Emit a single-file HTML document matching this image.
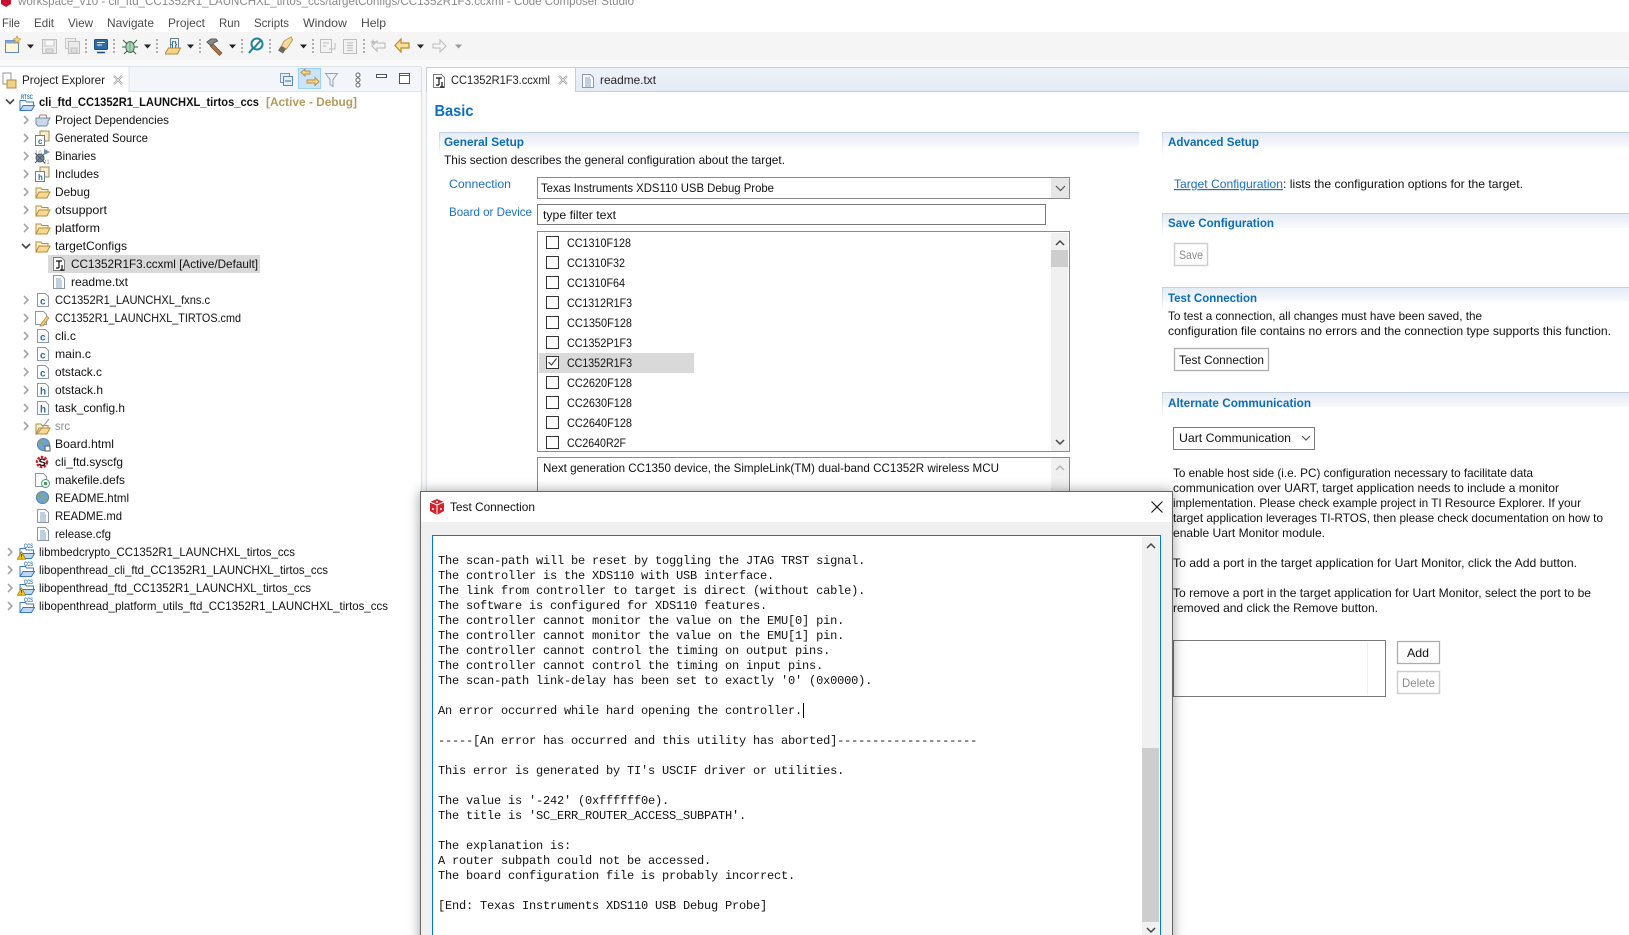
<!DOCTYPE html>
<html lang="en"><head><meta charset="utf-8"><title>Code Composer Studio</title>
<style>
html,body{margin:0;padding:0;background:#fff;width:1629px;height:935px;overflow:hidden}
svg{display:block;position:absolute;left:0;top:0}
text{font-family:"Liberation Sans",sans-serif;font-size:12px;fill:#111}
.b{font-weight:bold}
.h{font-weight:bold;fill:#0b6db8}
.l{fill:#1a6fc9}
.g{fill:#8c8c8c}
.m{fill:#4b4b4b}
.chev{fill:none;stroke:#a6a6a6;stroke-width:1.6}
.chevd{fill:none;stroke:#444;stroke-width:1.6}
.arr{fill:none;stroke:#555;stroke-width:1.2}
.ics{font-size:6px;font-weight:bold;fill:#2f78c4}
#log{position:absolute;left:438px;top:554px;margin:0;font:12px/15px "Liberation Mono",monospace;letter-spacing:-.2px;color:#111;white-space:pre}
#caret{position:absolute;left:803px;top:703px;width:1px;height:15px;background:#000}
</style></head><body>
<svg width="1629" height="935" viewBox="0 0 1629 935">
<defs>
<linearGradient id="sec" x1="0" y1="0" x2="0" y2="1"><stop offset="0" stop-color="#e3eaf4"/><stop offset="1" stop-color="#f8fafd"/></linearGradient>
<linearGradient id="fade" x1="0" y1="0" x2="0" y2="1"><stop offset="0" stop-color="#c6d2e2"/><stop offset="1" stop-color="#fff"/></linearGradient>
<linearGradient id="strip" x1="0" y1="0" x2="0" y2="1"><stop offset="0" stop-color="#f0f4fa"/><stop offset="1" stop-color="#e3eaf4"/></linearGradient>
<filter id="ds" x="-5%" y="-8%" width="110%" height="116%"><feDropShadow dx="0" dy="0" stdDeviation="6" flood-color="#000" flood-opacity=".38"/></filter>
<symbol id="fo" viewBox="0 0 16 16"><path d="M1 14V4h5l1 1.500h6V8" fill="#fff3cf" stroke="#b78a3c"/><path d="M1 14l3-6h11l-3 6z" fill="#f7d98f" stroke="#b78a3c"/></symbol>
<symbol id="fc" viewBox="0 0 16 16"><path d="M2.500 1.500h8l3 3v10h-11z" fill="#fff" stroke="#8b98ab"/><text x="5" y="12.500" style="font-size:10px;font-weight:bold;fill:#2b6aa8">c</text></symbol>
<symbol id="fh" viewBox="0 0 16 16"><path d="M2.500 1.500h8l3 3v10h-11z" fill="#fff" stroke="#8b98ab"/><text x="5" y="12.500" style="font-size:10px;font-weight:bold;fill:#2b6aa8">h</text></symbol>
<symbol id="ft" viewBox="0 0 16 16"><path d="M2.500 1.500h8l3 3v10h-11z" fill="#fff" stroke="#8b98ab"/><path d="M5 5h5M5 7h6M5 9h6M5 11h6M5 13h6" stroke="#7f9cc0" fill="none"/></symbol>
<symbol id="fx" viewBox="0 0 16 16"><path d="M2.500 1.500h8l3 3v10h-11z" fill="#fff" stroke="#7f7f7f"/><path d="M5 5h6M8 5v7M5 12h3M11 9v5M9 14h4" stroke="#111" fill="none" stroke-width="1.200"/></symbol>
<symbol id="pj" viewBox="0 0 16 16"><path d="M1 13V3.500h5.500l1 1.500h7v3" fill="#fff" stroke="#3c78c0"/><path d="M1 13.500l3-5h11.500l-3 5z" fill="#bcd8f2" stroke="#3c78c0"/></symbol>
<symbol id="gb" viewBox="0 0 16 16"><circle cx="8" cy="8" r="6.500" fill="#6aa3d8" stroke="#5a7fa6"/><path d="M3 5c2-2 4-2 5 0s-1 3-3 3-2 3-1 4" fill="#8aa66c"/><path d="M10 8c2 0 3 1 3 2s-2 3-3 2z" fill="#8aa66c"/></symbol>
<symbol id="wn" viewBox="0 0 12 12"><path d="M6 1l5.500 10H.5z" fill="#f5c518" stroke="#9a7a10"/><path d="M6 4v4M6 9v1" stroke="#222"/></symbol>
</defs>

<!-- title + menu -->
<rect width="1629" height="32" fill="#fff"/>
<path d="M1 0h10v4l-5 3-5-3z" fill="#c8102e"/>
<text x="18" y="5" textLength="616" lengthAdjust="spacingAndGlyphs" style="fill:#8a8a8a">workspace_v10 - cli_ftd_CC1352R1_LAUNCHXL_tirtos_ccs/targetConfigs/CC1352R1F3.ccxml - Code Composer Studio</text>
<g>
<text class="m" x="2" y="27" textLength="18" lengthAdjust="spacingAndGlyphs">File</text>
<text class="m" x="34" y="27" textLength="20" lengthAdjust="spacingAndGlyphs">Edit</text>
<text class="m" x="68" y="27" textLength="25" lengthAdjust="spacingAndGlyphs">View</text>
<text class="m" x="107" y="27" textLength="47" lengthAdjust="spacingAndGlyphs">Navigate</text>
<text class="m" x="168" y="27" textLength="37" lengthAdjust="spacingAndGlyphs">Project</text>
<text class="m" x="219" y="27" textLength="21" lengthAdjust="spacingAndGlyphs">Run</text>
<text class="m" x="254" y="27" textLength="35" lengthAdjust="spacingAndGlyphs">Scripts</text>
<text class="m" x="303" y="27" textLength="44" lengthAdjust="spacingAndGlyphs">Window</text>
<text class="m" x="361" y="27" textLength="25" lengthAdjust="spacingAndGlyphs">Help</text>
</g>

<!-- toolbar -->
<rect y="32" width="1629" height="28" fill="#f5f5f5"/>
<rect y="60" width="1629" height="875" fill="#fff"/>
<rect y="60" width="1629" height="7" fill="#fafafa"/>
<g>
<rect x="5.500" y="40.500" width="13" height="12" fill="#fdf6d8" stroke="#5d88b8"/><rect x="5.500" y="40.500" width="13" height="3" fill="#7fa8d4"/><path d="M17 36l1.200 2.500 2.500.5-2 1.600.5 2.500-2.200-1.300-2.200 1.300.5-2.500-2-1.600 2.500-.5z" fill="#f3d36b" stroke="#b78a3c" stroke-width=".6"/>
<path d="M27 44.500h7l-3.500 4z" fill="#222"/>
<rect x="42.500" y="39.500" width="14" height="14" fill="#ececec" stroke="#bdbdbd"/><rect x="45" y="40" width="9" height="6" fill="#fafafa" stroke="#c8c8c8"/><rect x="46" y="49" width="7" height="4" fill="#ddd" stroke="#c0c0c0"/>
<rect x="65.500" y="38.500" width="10" height="10" fill="#eee" stroke="#c6c6c6"/><rect x="68.500" y="41.500" width="11" height="12" fill="#ececec" stroke="#bdbdbd"/><rect x="71" y="48" width="6" height="5" fill="#ddd" stroke="#c0c0c0"/>
<path d="M86 39v2M86 43v2M86 47v2M86 51v2" stroke="#8f8f8f" stroke-width="1.400"/>
<rect x="94.500" y="39.500" width="13" height="10" rx="1" fill="#2c6da8" stroke="#1e4f80"/><path d="M97 42.500h8M97 45h5" stroke="#fff"/><path d="M97 52.500h8" stroke="#1e4f80" stroke-width="1.600"/>
<path d="M114 39v2M114 43v2M114 47v2M114 51v2" stroke="#8f8f8f" stroke-width="1.400"/>
<path d="M123 40l4 4M137 40l-4 4M122 47h4M134 47h4M124 54l3-3M136 54l-3-3" stroke="#3a5a46" fill="none"/>
<ellipse cx="130" cy="47" rx="4.200" ry="5.500" fill="#a8d6b4" stroke="#3e6b4c"/><path d="M130 42v10" stroke="#6aa87c"/>
<path d="M144 44.500h7l-3.500 4z" fill="#222"/>
<path d="M157 39v2M157 43v2M157 47v2M157 51v2" stroke="#8f8f8f" stroke-width="1.400"/>
<rect x="170.500" y="38.500" width="8" height="11" fill="#f2f5f9" stroke="#6d7d91"/><text x="171" y="47" style="font-size:8px;font-weight:bold;fill:#1b6a8f">{}</text><path d="M165.500 53l3-5h12l-3 6h-12z" fill="#f5d48a" stroke="#b78a3c"/>
<path d="M187 44.500h7l-3.500 4z" fill="#222"/>
<path d="M200 39v2M200 43v2M200 47v2M200 51v2" stroke="#8f8f8f" stroke-width="1.400"/>
<path d="M213 44l9 9-2.500 2.500-9-9z" fill="#a9744a" stroke="#6f4a28" stroke-width=".7"/><path d="M207 42l4-3h5l1.500 2-4 2-2.500 3z" fill="#8a8a8a" stroke="#5a5a5a"/>
<path d="M229 44.500h7l-3.500 4z" fill="#222"/>
<path d="M242 39v2M242 43v2M242 47v2M242 51v2" stroke="#8f8f8f" stroke-width="1.400"/>
<circle cx="257" cy="44" r="5.500" fill="#fff" stroke="#1f8397" stroke-width="2"/><path d="M261 40l-7 8M253 48l-4 5" stroke="#1f8397" stroke-width="2"/>
<path d="M270 39v2M270 43v2M270 47v2M270 51v2" stroke="#8f8f8f" stroke-width="1.400"/>
<path d="M284 41l7-4 1.500 3-6 9-5-3z" fill="#f6d8a4" stroke="#c69a50"/><path d="M281 46l5 3-3 4.500-5-3z" fill="#6e6a60"/>
<path d="M300 44.500h7l-3.500 4z" fill="#222"/>
<path d="M313 39v2M313 43v2M313 47v2M313 51v2" stroke="#8f8f8f" stroke-width="1.400"/>
<rect x="320.500" y="39.500" width="11" height="13" fill="#f3f3f3" stroke="#bdbdbd"/><path d="M323 43h6M323 46h3M335 43v6h-6" stroke="#bbb" fill="none"/>
<rect x="343.500" y="39.500" width="13" height="14" fill="#f3f3f3" stroke="#bdbdbd"/><path d="M347 43h6M347 45.500h6M347 48h6M347 50.500h6" stroke="#bbb"/>
<path d="M364 39v2M364 43v2M364 47v2M364 51v2" stroke="#8f8f8f" stroke-width="1.400"/>
<path d="M377 41l-5 5 5 5v-3h8v-5h-8z" fill="#f4f4f4" stroke="#b8b8b8"/><path d="M373 39l.8 2 2 .4-1.500 1.200.4 2-1.700-1-1.700 1 .4-2-1.500-1.200 2-.4z" fill="#bbb"/>
<path d="M401 39l-6 6.500 6 6.500v-4h8v-5h-8z" fill="#f8dfa0" stroke="#c08a1e" stroke-width="1.200"/>
<path d="M417 44.500h7l-3.500 4z" fill="#222"/>
<path d="M440 40l6 6-6 6v-4h-7v-4h7z" fill="#f6f6f6" stroke="#bdbdbd"/>
<path d="M455 44.500h7l-3.500 4z" fill="#999"/>
</g>

<!-- left panel header -->
<rect x="0" y="67" width="421" height="25" fill="#f2f5fa"/>
<rect x="0" y="67" width="129" height="25" fill="#fff"/>
<path d="M0 66.500h421M129 67v25M129 91.500h292" stroke="#dfe3ea" fill="none"/>
<path d="M421.500 67V492" stroke="#dcdcdc"/>
<path d="M422 67h4v868h-4z" fill="#f7f7f7"/>
<rect x="3" y="73" width="8" height="11" fill="#fff" stroke="#8a94a3"/><path d="M7 80h9v8H7z" fill="#f1d187" stroke="#b78a3c"/>
<text x="22" y="84" textLength="83" lengthAdjust="spacingAndGlyphs" style="fill:#222">Project Explorer</text>
<path d="M114 76l8 8M122 76l-8 8" stroke="#9a9a9a" stroke-width="2.200"/><path d="M114 76l8 8M122 76l-8 8" stroke="#fff" stroke-width=".6"/>
<rect x="280.500" y="73.500" width="9" height="9" fill="#e6eef7" stroke="#7a96b8"/><rect x="283.500" y="76.500" width="9" height="9" fill="#e6eef7" stroke="#5f83ad"/><path d="M285 81h6" stroke="#2c6da8"/>
<rect x="298.500" y="68.500" width="22" height="20" fill="#cce4f7" stroke="#99d1ff"/>
<path d="M310 71h-5v-2l-4 3.500 4 3.500v-2h5z" fill="#f6d890" stroke="#b78a3c" stroke-width=".9"/><path d="M307 80h8v-2.500l4 4-4 4V83h-8z" fill="#f6d890" stroke="#b78a3c" stroke-width=".9"/>
<path d="M325.500 73.500h12l-4.500 6v7l-3-2v-5z" fill="#eef2f7" stroke="#8fa3b8"/>
<circle cx="358" cy="75" r="2" fill="#fff" stroke="#666"/><circle cx="358" cy="80" r="2" fill="#fff" stroke="#666"/><circle cx="358" cy="85" r="2" fill="#fff" stroke="#666"/>
<rect x="376.500" y="74.500" width="10" height="3" fill="#fff" stroke="#555"/>
<rect x="399.500" y="73.500" width="10" height="10" fill="#fff" stroke="#555"/><path d="M400 75.500h9" stroke="#555"/>

<!-- tree -->
<path class="chevd" d="M6 99.500l4 4 4-4"/>
<use href="#pj" x="19" y="97" width="16" height="16"/><text class="ics" x="21" y="99" textLength="12" lengthAdjust="spacingAndGlyphs">RTSC</text>
<text class="b" x="39" y="106" textLength="220" lengthAdjust="spacingAndGlyphs">cli_ftd_CC1352R1_LAUNCHXL_tirtos_ccs</text>
<text class="b" x="266" y="106" textLength="91" lengthAdjust="spacingAndGlyphs" style="fill:#b59a5f">[Active - Debug]</text>

<path class="chev" d="M24 116l4 4-4 4M24 134l4 4-4 4M24 152l4 4-4 4M24 170l4 4-4 4M24 188l4 4-4 4M24 206l4 4-4 4M24 224l4 4-4 4M24 296l4 4-4 4M24 314l4 4-4 4M24 332l4 4-4 4M24 350l4 4-4 4M24 368l4 4-4 4M24 386l4 4-4 4M24 404l4 4-4 4M24 422l4 4-4 4M8 548l4 4-4 4M8 566l4 4-4 4M8 584l4 4-4 4M8 602l4 4-4 4"/>
<path class="chevd" d="M22 244l4 4 4-4"/>

<path d="M36 118h14l-2 3v3l-2 2h-8l-2-2z" fill="#c9d9ea" stroke="#6f8aa8"/><path d="M39 118l1-3h6l1 3" fill="none" stroke="#b07070"/>
<text x="55" y="124" textLength="114" lengthAdjust="spacingAndGlyphs">Project Dependencies</text>
<rect x="40" y="131" width="9" height="10" fill="#f7eccb" stroke="#a58b52"/><rect x="35.500" y="135.500" width="9" height="10" fill="#fff" stroke="#6f7f90"/><text x="38" y="144" style="font-size:8px;font-weight:bold;fill:#2b6aa8">c</text>
<text x="55" y="142" textLength="93" lengthAdjust="spacingAndGlyphs">Generated Source</text>
<text x="35" y="155" style="font-size:6px;fill:#999">10</text><text x="43" y="164" style="font-size:6px;fill:#999">01</text>
<circle cx="40" cy="158" r="4" fill="#7c8b99" stroke="#4e5a66"/><path d="M35 153l10 10M45 153l-10 10" stroke="#4e5a66"/><path d="M44 149l6 3-6 3z" fill="#6b8db0"/>
<text x="55" y="160" textLength="41" lengthAdjust="spacingAndGlyphs">Binaries</text>
<rect x="40" y="167" width="9" height="10" fill="#f7eccb" stroke="#a58b52"/><rect x="35.500" y="171.500" width="9" height="10" fill="#fff" stroke="#6f7f90"/><text x="38" y="180" style="font-size:8px;font-weight:bold;fill:#2b6aa8">h</text>
<text x="55" y="178" textLength="44" lengthAdjust="spacingAndGlyphs">Includes</text>
<use href="#fo" x="35" y="184" width="16" height="16"/><text x="55" y="196" textLength="35" lengthAdjust="spacingAndGlyphs">Debug</text>
<use href="#fo" x="35" y="202" width="16" height="16"/><text x="55" y="214" textLength="52" lengthAdjust="spacingAndGlyphs">otsupport</text>
<use href="#fo" x="35" y="220" width="16" height="16"/><text x="55" y="232" textLength="45" lengthAdjust="spacingAndGlyphs">platform</text>
<use href="#fo" x="35" y="238" width="16" height="16"/><text x="55" y="250" textLength="72" lengthAdjust="spacingAndGlyphs">targetConfigs</text>
<rect x="48" y="255" width="212" height="18" fill="#d9d9d9"/>
<use href="#fx" x="51" y="256" width="16" height="16"/><text x="71" y="268" textLength="187" lengthAdjust="spacingAndGlyphs">CC1352R1F3.ccxml [Active/Default]</text>
<use href="#ft" x="51" y="274" width="16" height="16"/><text x="71" y="286" textLength="57" lengthAdjust="spacingAndGlyphs">readme.txt</text>
<use href="#fc" x="35" y="292" width="16" height="16"/><text x="55" y="304" textLength="155" lengthAdjust="spacingAndGlyphs">CC1352R1_LAUNCHXL_fxns.c</text>
<path d="M35.500 311.500h8l3 3v10h-11z" fill="#fff" stroke="#8b98ab"/><path d="M41 324l6-8 2 2-6 8h-3z" fill="#f0c96a" stroke="#a58b52" stroke-width=".7"/>
<text x="55" y="322" textLength="186" lengthAdjust="spacingAndGlyphs">CC1352R1_LAUNCHXL_TIRTOS.cmd</text>
<use href="#fc" x="35" y="328" width="16" height="16"/><text x="55" y="340" textLength="21" lengthAdjust="spacingAndGlyphs">cli.c</text>
<use href="#fc" x="35" y="346" width="16" height="16"/><text x="55" y="358" textLength="36" lengthAdjust="spacingAndGlyphs">main.c</text>
<use href="#fc" x="35" y="364" width="16" height="16"/><text x="55" y="376" textLength="47" lengthAdjust="spacingAndGlyphs">otstack.c</text>
<use href="#fh" x="35" y="382" width="16" height="16"/><text x="55" y="394" textLength="48" lengthAdjust="spacingAndGlyphs">otstack.h</text>
<use href="#fh" x="35" y="400" width="16" height="16"/><text x="55" y="412" textLength="70" lengthAdjust="spacingAndGlyphs">task_config.h</text>
<use href="#fo" x="35" y="420" width="16" height="16"/><path d="M37 434l12-15" stroke="#a0a0a0" stroke-width="1.200"/><text x="55" y="430" textLength="15" lengthAdjust="spacingAndGlyphs" class="g">src</text>
<use href="#gb" x="36" y="437" width="15" height="15"/><path d="M45 446h5v5h-5z" fill="#fff" stroke="#555"/><text x="55" y="448" textLength="59" lengthAdjust="spacingAndGlyphs">Board.html</text>
<circle cx="42" cy="462" r="5" fill="none" stroke="#c8272b" stroke-width="2.500" stroke-dasharray="2.500 1.200"/><text x="38.500" y="466" style="font-size:11px;font-weight:bold;fill:#111">S</text>
<text x="55" y="466" textLength="68" lengthAdjust="spacingAndGlyphs">cli_ftd.syscfg</text>
<path d="M35.500 473.500h8l3 3v10h-11z" fill="#fff" stroke="#8b98ab"/><circle cx="45.500" cy="483.500" r="4" fill="#fff" stroke="#3f9a62"/><circle cx="45.500" cy="483.500" r="1.700" fill="#3f9a62"/>
<text x="55" y="484" textLength="70" lengthAdjust="spacingAndGlyphs">makefile.defs</text>
<use href="#gb" x="35" y="490" width="15" height="15"/><text x="55" y="502" textLength="74" lengthAdjust="spacingAndGlyphs">README.html</text>
<use href="#ft" x="35" y="508" width="16" height="16"/><text x="55" y="520" textLength="67" lengthAdjust="spacingAndGlyphs">README.md</text>
<use href="#ft" x="35" y="526" width="16" height="16"/><text x="55" y="538" textLength="56" lengthAdjust="spacingAndGlyphs">release.cfg</text>

<use href="#pj" x="19" y="545" width="16" height="16"/><text class="ics" x="24" y="548" textLength="9" lengthAdjust="spacingAndGlyphs">CCS</text><use href="#wn" x="17" y="551" width="9" height="9"/>
<text x="39" y="556" textLength="256" lengthAdjust="spacingAndGlyphs">libmbedcrypto_CC1352R1_LAUNCHXL_tirtos_ccs</text>
<use href="#pj" x="19" y="563" width="16" height="16"/><text class="ics" x="24" y="566" textLength="9" lengthAdjust="spacingAndGlyphs">CCS</text>
<text x="39" y="574" textLength="289" lengthAdjust="spacingAndGlyphs">libopenthread_cli_ftd_CC1352R1_LAUNCHXL_tirtos_ccs</text>
<use href="#pj" x="19" y="581" width="16" height="16"/><text class="ics" x="24" y="584" textLength="9" lengthAdjust="spacingAndGlyphs">CCS</text><use href="#wn" x="17" y="587" width="9" height="9"/>
<text x="39" y="592" textLength="272" lengthAdjust="spacingAndGlyphs">libopenthread_ftd_CC1352R1_LAUNCHXL_tirtos_ccs</text>
<use href="#pj" x="19" y="599" width="16" height="16"/><text class="ics" x="24" y="602" textLength="9" lengthAdjust="spacingAndGlyphs">CCS</text>
<text x="39" y="610" textLength="349" lengthAdjust="spacingAndGlyphs">libopenthread_platform_utils_ftd_CC1352R1_LAUNCHXL_tirtos_ccs</text>

<!-- editor tabs -->
<rect x="426" y="67" width="1203" height="25" fill="url(#strip)"/>
<path d="M426 67.500h1203M426 91.500h1203" stroke="#c3cfe0" fill="none"/>
<path d="M426.500 92V67.500h149V92" fill="#fff" stroke="#c3cfe0"/>
<rect x="427" y="90" width="148" height="3" fill="#fff"/>
<path d="M426.500 92V935" stroke="#dde3ec"/>
<use href="#fx" x="431" y="73" width="16" height="16"/>
<text x="451" y="84" textLength="99" lengthAdjust="spacingAndGlyphs" style="fill:#222">CC1352R1F3.ccxml</text>
<path d="M559 76l8 8M567 76l-8 8" stroke="#9a9a9a" stroke-width="2.200"/><path d="M559 76l8 8M567 76l-8 8" stroke="#fff" stroke-width=".6"/>
<use href="#ft" x="580" y="73" width="16" height="16"/>
<text x="600" y="84" textLength="56" lengthAdjust="spacingAndGlyphs" style="fill:#222">readme.txt</text>

<text x="434.500" y="116" textLength="39" lengthAdjust="spacingAndGlyphs" style="font-size:16px;font-weight:bold;fill:#0a6fc2">Basic</text>

<!-- General Setup -->
<rect x="439" y="132" width="700" height="15" fill="url(#sec)"/><path d="M439 132.500h700" stroke="#c3cfe0"/><path d="M439 133h1v24h-1z" fill="url(#fade)"/>
<text class="h" x="444" y="146" textLength="80" lengthAdjust="spacingAndGlyphs">General Setup</text>
<text x="444" y="164" textLength="341" lengthAdjust="spacingAndGlyphs">This section describes the general configuration about the target.</text>
<text class="l" x="449" y="188" textLength="62" lengthAdjust="spacingAndGlyphs">Connection</text>
<rect x="537.500" y="177.500" width="532" height="21" fill="#fff" stroke="#8a8a8a"/>
<rect x="1051" y="178" width="18" height="20" fill="#e6e6e6"/><path class="arr" d="M1056 186l4.500 4.500 4.500-4.500"/>
<text x="541" y="192" textLength="233" lengthAdjust="spacingAndGlyphs">Texas Instruments XDS110 USB Debug Probe</text>
<text class="l" x="449" y="216" textLength="83" lengthAdjust="spacingAndGlyphs">Board or Device</text>
<rect x="537.500" y="204.500" width="508" height="20" fill="#fff" stroke="#7a7a7a"/>
<text x="543" y="219" textLength="73" lengthAdjust="spacingAndGlyphs">type filter text</text>

<rect x="537.500" y="231.500" width="532" height="220" fill="#fff" stroke="#8a8a8a"/>
<rect x="1051" y="233" width="17" height="218" fill="#f0f0f0"/>
<rect x="1051" y="250" width="17" height="17" fill="#cdcdcd"/>
<path d="M1056 245l4-4 4 4M1056 440l4 4 4-4" fill="none" stroke="#444" stroke-width="1.500"/>
<rect x="539" y="353" width="155" height="20" fill="#d9d9d9"/>
<g fill="#fff" stroke="#333">
<rect x="546.500" y="236.500" width="12" height="12"/><rect x="546.500" y="256.500" width="12" height="12"/><rect x="546.500" y="276.500" width="12" height="12"/><rect x="546.500" y="296.500" width="12" height="12"/><rect x="546.500" y="316.500" width="12" height="12"/><rect x="546.500" y="336.500" width="12" height="12"/><rect x="546.500" y="356.500" width="12" height="12"/><rect x="546.500" y="376.500" width="12" height="12"/><rect x="546.500" y="396.500" width="12" height="12"/><rect x="546.500" y="416.500" width="12" height="12"/><rect x="546.500" y="436.500" width="12" height="12"/>
</g>
<path d="M548.500 362l3 3 5-6.500" fill="none" stroke="#444" stroke-width="1.200"/>
<text x="567" y="247" textLength="64" lengthAdjust="spacingAndGlyphs">CC1310F128</text>
<text x="567" y="267" textLength="58" lengthAdjust="spacingAndGlyphs">CC1310F32</text>
<text x="567" y="287" textLength="58" lengthAdjust="spacingAndGlyphs">CC1310F64</text>
<text x="567" y="307" textLength="65" lengthAdjust="spacingAndGlyphs">CC1312R1F3</text>
<text x="567" y="327" textLength="65" lengthAdjust="spacingAndGlyphs">CC1350F128</text>
<text x="567" y="347" textLength="65" lengthAdjust="spacingAndGlyphs">CC1352P1F3</text>
<text x="567" y="367" textLength="65" lengthAdjust="spacingAndGlyphs">CC1352R1F3</text>
<text x="567" y="387" textLength="65" lengthAdjust="spacingAndGlyphs">CC2620F128</text>
<text x="567" y="407" textLength="65" lengthAdjust="spacingAndGlyphs">CC2630F128</text>
<text x="567" y="427" textLength="65" lengthAdjust="spacingAndGlyphs">CC2640F128</text>
<text x="567" y="447" textLength="59" lengthAdjust="spacingAndGlyphs">CC2640R2F</text>

<rect x="537.500" y="457.500" width="532" height="60" fill="#fff" stroke="#8a8a8a"/>
<rect x="1051" y="458" width="18" height="60" fill="#f0f0f0"/>
<path d="M1056 470l4-4 4 4" fill="none" stroke="#b5b5b5" stroke-width="1.500"/>
<text x="543" y="472" textLength="456" lengthAdjust="spacingAndGlyphs">Next generation CC1350 device, the SimpleLink(TM) dual-band CC1352R wireless MCU</text>

<!-- Right column -->
<rect x="1162" y="132" width="467" height="15" fill="url(#sec)"/><path d="M1162 132.500h467" stroke="#c3cfe0"/><path d="M1162 133h1v24h-1z" fill="url(#fade)"/>
<text class="h" x="1168" y="146" textLength="91" lengthAdjust="spacingAndGlyphs">Advanced Setup</text>
<text x="1174" y="188" textLength="109" lengthAdjust="spacingAndGlyphs" text-decoration="underline" style="fill:#1a6fc9">Target Configuration</text>
<text x="1283" y="188" textLength="240" lengthAdjust="spacingAndGlyphs">: lists the configuration options for the target.</text>

<rect x="1162" y="213" width="467" height="15" fill="url(#sec)"/><path d="M1162 213.500h467" stroke="#c3cfe0"/><path d="M1162 214h1v24h-1z" fill="url(#fade)"/>
<text class="h" x="1168" y="227" textLength="106" lengthAdjust="spacingAndGlyphs">Save Configuration</text>
<rect x="1174.500" y="243.500" width="33" height="22" fill="#fff" stroke="#cfcfcf" stroke-width="1.500"/>
<text class="g" x="1179" y="259" textLength="24" lengthAdjust="spacingAndGlyphs">Save</text>

<rect x="1162" y="287" width="467" height="15" fill="url(#sec)"/><path d="M1162 287.500h467" stroke="#c3cfe0"/><path d="M1162 288h1v24h-1z" fill="url(#fade)"/>
<text class="h" x="1168" y="302" textLength="89" lengthAdjust="spacingAndGlyphs">Test Connection</text>
<text x="1168" y="320" textLength="314" lengthAdjust="spacingAndGlyphs">To test a connection, all changes must have been saved, the</text>
<text x="1168" y="335" textLength="443" lengthAdjust="spacingAndGlyphs">configuration file contains no errors and the connection type supports this function.</text>
<rect x="1174.500" y="348.500" width="94" height="22" fill="#fff" stroke="#adadad" stroke-width="1.300"/>
<text x="1179" y="364" textLength="85" lengthAdjust="spacingAndGlyphs">Test Connection</text>

<rect x="1162" y="392" width="467" height="15" fill="url(#sec)"/><path d="M1162 392.500h467" stroke="#c3cfe0"/><path d="M1162 393h1v24h-1z" fill="url(#fade)"/>
<text class="h" x="1168" y="407" textLength="143" lengthAdjust="spacingAndGlyphs">Alternate Communication</text>
<rect x="1173.500" y="427.500" width="141" height="22" fill="#fff" stroke="#7a7a7a"/>
<text x="1179" y="442" textLength="112" lengthAdjust="spacingAndGlyphs">Uart Communication</text>
<path class="arr" d="M1302 436l4 4 4-4"/>

<text x="1173" y="477" textLength="360" lengthAdjust="spacingAndGlyphs">To enable host side (i.e. PC) configuration necessary to facilitate data</text>
<text x="1173" y="492" textLength="386" lengthAdjust="spacingAndGlyphs">communication over UART, target application needs to include a monitor</text>
<text x="1173" y="507" textLength="408" lengthAdjust="spacingAndGlyphs">implementation. Please check example project in TI Resource Explorer. If your</text>
<text x="1173" y="522" textLength="430" lengthAdjust="spacingAndGlyphs">target application leverages TI-RTOS, then please check documentation on how to</text>
<text x="1173" y="537" textLength="152" lengthAdjust="spacingAndGlyphs">enable Uart Monitor module.</text>
<text x="1173" y="567" textLength="404" lengthAdjust="spacingAndGlyphs">To add a port in the target application for Uart Monitor, click the Add button.</text>
<text x="1173" y="597" textLength="418" lengthAdjust="spacingAndGlyphs">To remove a port in the target application for Uart Monitor, select the port to be</text>
<text x="1173" y="612" textLength="205" lengthAdjust="spacingAndGlyphs">removed and click the Remove button.</text>

<rect x="1173.500" y="640.500" width="212" height="56" fill="#fff" stroke="#7a7a7a"/>
<path d="M1367.500 642v53" stroke="#eaf1fb"/>
<rect x="1397.500" y="641.500" width="42" height="22" fill="#fff" stroke="#adadad" stroke-width="1.300"/>
<text x="1407" y="657" textLength="22" lengthAdjust="spacingAndGlyphs">Add</text>
<rect x="1397.500" y="671.500" width="42" height="22" fill="#fff" stroke="#cfcfcf" stroke-width="1.500"/>
<text class="g" x="1402" y="687" textLength="33" lengthAdjust="spacingAndGlyphs">Delete</text>

<!-- Dialog -->
<rect x="420.500" y="491.500" width="752" height="460" fill="#f0f0f0" stroke="#666" filter="url(#ds)"/>
<rect x="421" y="492" width="751" height="30" fill="#fff"/>
<path d="M437 499l7 3v9l-7 4-7-4v-9z" fill="#d2232a"/><path d="M430 502l7 3 7-3M437 505v10" stroke="#fff" fill="none"/><circle cx="437" cy="501.800" r="1" fill="#fff"/><circle cx="433" cy="509" r="1" fill="#fff"/><circle cx="441" cy="509" r="1" fill="#fff"/>
<text x="450" y="511" textLength="85" lengthAdjust="spacingAndGlyphs">Test Connection</text>
<path d="M1151.500 501.500l11 11M1162.500 501.500l-11 11" stroke="#111" stroke-width="1.100"/>
<rect x="432.500" y="535.500" width="728" height="420" fill="#fff" stroke="#0078d7"/>
<rect x="1142" y="537" width="17" height="398" fill="#f0f0f0"/>
<rect x="1142" y="748" width="17" height="174" fill="#cdcdcd"/>
<path d="M1147 548l4-4 4 4M1147 928l4 4 4-4" fill="none" stroke="#444" stroke-width="1.500"/>
</svg>
<pre id="log">The scan-path will be reset by toggling the JTAG TRST signal.
The controller is the XDS110 with USB interface.
The link from controller to target is direct (without cable).
The software is configured for XDS110 features.
The controller cannot monitor the value on the EMU[0] pin.
The controller cannot monitor the value on the EMU[1] pin.
The controller cannot control the timing on output pins.
The controller cannot control the timing on input pins.
The scan-path link-delay has been set to exactly '0' (0x0000).

An error occurred while hard opening the controller.

-----[An error has occurred and this utility has aborted]--------------------

This error is generated by TI's USCIF driver or utilities.

The value is '-242' (0xffffff0e).
The title is 'SC_ERR_ROUTER_ACCESS_SUBPATH'.

The explanation is:
A router subpath could not be accessed.
The board configuration file is probably incorrect.

[End: Texas Instruments XDS110 USB Debug Probe]</pre>
<div id="caret"></div>
</body></html>
